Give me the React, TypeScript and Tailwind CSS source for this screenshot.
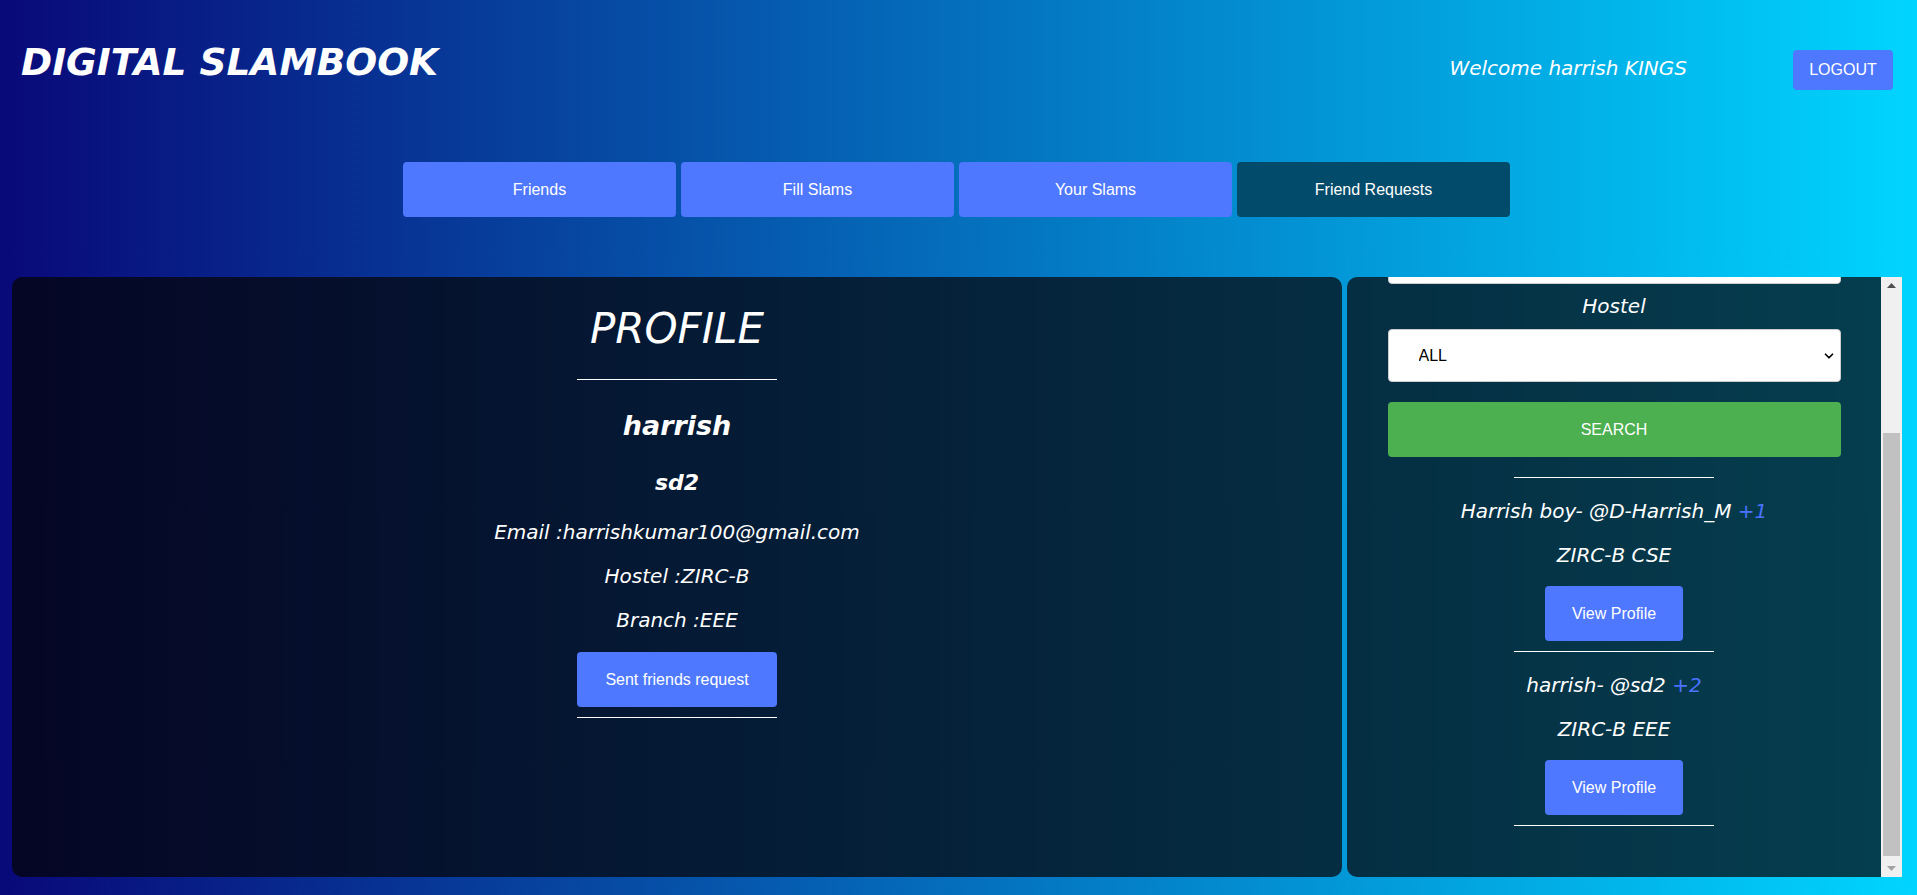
import React, { useEffect, useRef } from "react";
import { ChevronDown } from "lucide-react";

interface Friend {
  name: string;
  username: string;
  count: number;
  hostel: string;
  branch: string;
}

const friends: Friend[] = [
  { name: "Harrish boy", username: "D-Harrish_M", count: 1, hostel: "ZIRC-B", branch: "CSE" },
  { name: "harrish", username: "sd2", count: 2, hostel: "ZIRC-B", branch: "EEE" },
];

const tabs = ["Friends", "Fill Slams", "Your Slams", "Friend Requests"];

const App = () => {
  const listRef = useRef<HTMLDivElement>(null);

  useEffect(() => {
    // the search list is scrolled down past the name field
    if (listRef.current) {
      listRef.current.scrollTop = 66;
    }
  }, []);

  return (
    <div className="h-[895px] w-full overflow-hidden bg-[linear-gradient(90deg,#090979_0%,#00d4ff_100%)] font-['DejaVu_Sans',sans-serif] text-white">
      {/* header */}
      <div className="flex h-[90px] items-start justify-between pl-[21px] pr-[24px]">
        <h1 className="mt-[44px] text-[37.5px] font-bold italic leading-none">DIGITAL SLAMBOOK</h1>
        <div className="flex items-start gap-[106px]">
          <span className="mt-[58px] text-[20px] italic leading-none">Welcome harrish KINGS</span>
          <button className="mt-[50px] h-[40px] w-[100px] rounded-[4px] bg-[#4e78ff] font-['Liberation_Sans',Arial,sans-serif] text-[16px] text-white">
            LOGOUT
          </button>
        </div>
      </div>

      {/* tabs */}
      <div className="mt-[72px] flex justify-center gap-[5px] pr-[4px]">
        {tabs.map((t, i) => (
          <button
            key={t}
            className={`h-[55px] w-[273px] rounded-[4px] font-['Liberation_Sans',Arial,sans-serif] text-[16px] text-white ${
              i === 3 ? "bg-[#034b6a]" : "bg-[#4e78ff]"
            }`}
          >
            {t}
          </button>
        ))}
      </div>

      {/* panels */}
      <div className="mt-[60px] flex h-[600px] gap-[5px] pl-[12px] pr-[15px]">
        <div className="flex flex-1 flex-col items-center rounded-[10px] bg-[linear-gradient(90deg,#050525,#053f4f)] bg-fixed">
          <h2 className="mt-[31px] text-[42px] italic leading-none">PROFILE</h2>
          <div className="mt-[29px] h-px w-[200px] bg-white" />
          <h3 className="mt-[32px] text-[27px] font-bold italic leading-none">harrish</h3>
          <h4 className="mt-[33px] text-[22px] font-bold italic leading-none">sd2</h4>
          <p className="mt-[28px] text-[20px] italic leading-none">Email :harrishkumar100@gmail.com</p>
          <p className="mt-[24px] text-[20px] italic leading-none">Hostel :ZIRC-B</p>
          <p className="mt-[24px] text-[20px] italic leading-none">Branch :EEE</p>
          <button className="mt-[22px] h-[55px] w-[200px] rounded-[4px] bg-[#4e78ff] font-['Liberation_Sans',Arial,sans-serif] text-[16px] text-white">
            Sent friends request
          </button>
          <div className="mt-[10px] h-px w-[200px] bg-white" />
        </div>

        <div className="flex w-[555px] overflow-hidden rounded-l-[10px] bg-[linear-gradient(90deg,#050525,#053f4f)] bg-fixed">
          <div ref={listRef} className="flex-1 overflow-hidden">
            <div className="flex flex-col items-center pb-[57px] pt-[20px]">
              <input
                className="h-[53px] w-[453px] rounded-[4px] border border-[#cccccc] bg-white px-[30px] font-['Liberation_Sans',Arial,sans-serif] text-[16px] text-black outline-none"
                defaultValue=""
              />
              <label className="mt-[12px] text-[20px] italic leading-none">Hostel</label>
              <div className="relative mt-[13px] h-[53px] w-[453px]">
                <select className="h-full w-full appearance-none rounded-[4px] border border-[#cccccc] bg-white pl-[30px] font-['Liberation_Sans',Arial,sans-serif] text-[16px] text-black outline-none">
                  <option>ALL</option>
                  <option>ZIRC-A</option>
                  <option>ZIRC-B</option>
                </select>
                <ChevronDown
                  size={14}
                  strokeWidth={3}
                  className="pointer-events-none absolute right-[5px] top-[20px] text-black"
                />
              </div>
              <button className="mt-[20px] h-[55px] w-[453px] rounded-[4px] bg-[#4caf50] font-['Liberation_Sans',Arial,sans-serif] text-[16px] text-white">
                SEARCH
              </button>
              <div className="mt-[20px] h-px w-[200px] bg-white" />

              {friends.map((f) => (
                <React.Fragment key={f.username}>
                  <p className="mt-[23px] text-[20px] italic leading-none">
                    {f.name}- @{f.username} <span className="text-[#4a72ff]">+{f.count}</span>
                  </p>
                  <p className="mt-[24px] text-[20px] italic leading-none">
                    {f.hostel} {f.branch}
                  </p>
                  <button className="mt-[21px] h-[55px] w-[138px] rounded-[4px] bg-[#4e78ff] font-['Liberation_Sans',Arial,sans-serif] text-[16px] text-white">
                    View Profile
                  </button>
                  <div className="mt-[10px] h-px w-[200px] bg-white" />
                </React.Fragment>
              ))}
            </div>
          </div>

          {/* scrollbar */}
          <div className="flex w-[21px] flex-col bg-[#f0f0f0]">
            <div className="flex h-[17px] items-center justify-center">
              <svg width="9" height="5" viewBox="0 0 9 5">
                <polygon points="4.5,0 9,5 0,5" fill="#505050" />
              </svg>
            </div>
            <div className="flex flex-1 flex-col px-[2px] pb-[4px] pt-[139px]">
              <div className="flex-1 bg-[#c1c1c1]" />
            </div>
            <div className="flex h-[17px] items-center justify-center">
              <svg width="9" height="5" viewBox="0 0 9 5">
                <polygon points="0,0 9,0 4.5,5" fill="#a3a3a3" />
              </svg>
            </div>
          </div>
        </div>
      </div>
    </div>
  );
};

export default App;
